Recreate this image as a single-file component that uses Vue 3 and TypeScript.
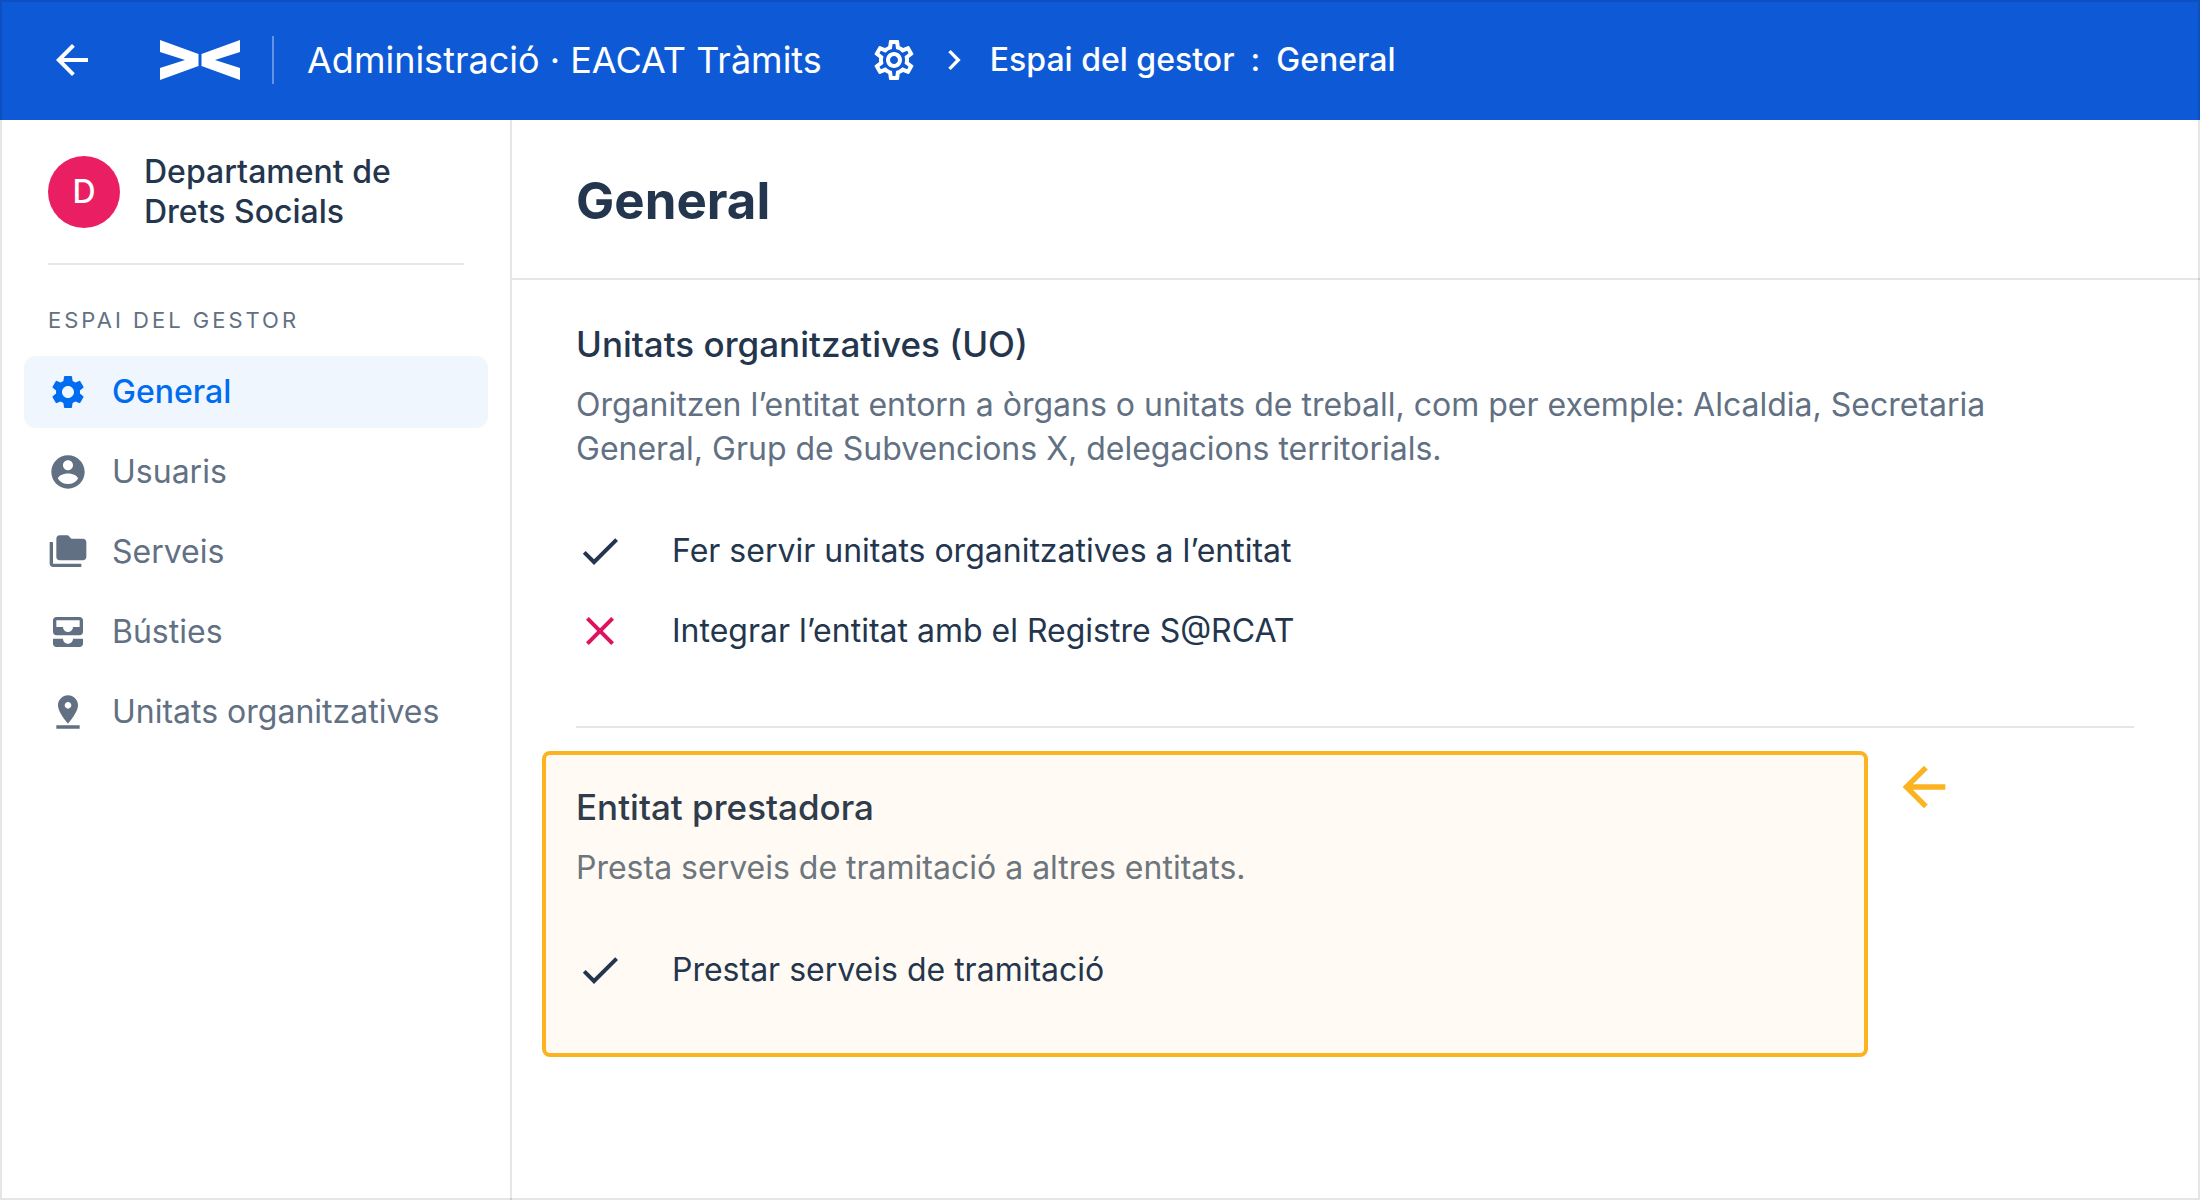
<script setup lang="ts">
interface NavItem {
  label: string
  icon: string
  active?: boolean
}

interface Setting {
  label: string
  enabled: boolean
}

const CHECK = 'M9 16.17 4.83 12l-1.42 1.41L9 19 21 7l-1.41-1.41z'
const CROSS =
  'M19 6.41 17.59 5 12 10.59 6.41 5 5 6.41 10.59 12 5 17.59 6.41 19 12 13.41 17.59 19 19 17.59 13.41 12z'
const ARROW = 'M20 11H7.83l5.59-5.59L12 4l-8 8 8 8 1.41-1.41L7.83 13H20z'

const navItems: NavItem[] = [
  {
    label: 'General',
    active: true,
    icon: 'M19.14 12.94c.04-.3.06-.61.06-.94 0-.32-.02-.64-.07-.94l2.03-1.58c.18-.14.23-.41.12-.61l-1.92-3.32c-.12-.22-.37-.29-.59-.22l-2.39.96c-.5-.38-1.03-.7-1.62-.94l-.36-2.54c-.04-.24-.24-.41-.48-.41h-3.84c-.24 0-.43.17-.47.41l-.36 2.54c-.59.24-1.13.57-1.62.94l-2.39-.96c-.22-.08-.47 0-.59.22L2.74 8.87c-.12.21-.08.47.12.61l2.03 1.58c-.05.3-.09.63-.09.94s.02.64.07.94l-2.03 1.58c-.18.14-.23.41-.12.61l1.92 3.32c.12.22.37.29.59.22l2.39-.96c.5.38 1.03.7 1.62.94l.36 2.54c.05.24.24.41.48.41h3.84c.24 0 .44-.17.47-.41l.36-2.54c.59-.24 1.13-.56 1.62-.94l2.39.96c.22.08.47 0 .59-.22l1.92-3.32c.12-.22.07-.47-.12-.61l-2.01-1.58zM12 15.6c-1.98 0-3.6-1.62-3.6-3.6s1.62-3.6 3.6-3.6 3.6 1.62 3.6 3.6-1.62 3.6-3.6 3.6z',
  },
  {
    label: 'Usuaris',
    icon: 'M12 2C6.48 2 2 6.48 2 12s4.48 10 10 10 10-4.48 10-10S17.52 2 12 2zm0 3c1.66 0 3 1.34 3 3s-1.34 3-3 3-3-1.34-3-3 1.34-3 3-3zm0 14.2c-2.5 0-4.71-1.28-6-3.22.03-1.99 4-3.08 6-3.08 1.99 0 5.97 1.09 6 3.08-1.29 1.94-3.5 3.22-6 3.22z',
  },
  {
    label: 'Serveis',
    icon: 'M3 6H1v13c0 1.1.9 2 2 2h17v-2H3V6zm18-2h-7l-2-2H7c-1.1 0-1.99.9-1.99 2L5 15c0 1.1.9 2 2 2h14c1.1 0 2-.9 2-2V6c0-1.1-.9-2-2-2z',
  },
  {
    label: 'Bústies',
    icon: 'M19 3H5c-1.1 0-2 .9-2 2v7c0 1.1.9 2 2 2h14c1.1 0 2-.9 2-2V5c0-1.1-.9-2-2-2zm0 6h-4c0 1.62-1.38 3-3 3s-3-1.38-3-3H5V5h14v4zm-4 7h6v3c0 1.1-.9 2-2 2H5c-1.1 0-2-.9-2-2v-3h6c0 1.66 1.34 3 3 3s3-1.34 3-3z',
  },
  {
    label: 'Unitats organitzatives',
    icon: 'M18 8c0-3.31-2.69-6-6-6S6 4.69 6 8c0 4.5 6 11 6 11s6-6.5 6-11zm-8 0c0-1.1.9-2 2-2s2 .9 2 2-.89 2-2 2c-1.1 0-2-.9-2-2zM5 20v2h14v-2H5z',
  },
]

const unitSettings: Setting[] = [
  { label: 'Fer servir unitats organitzatives a l’entitat', enabled: true },
  { label: 'Integrar l’entitat amb el Registre S@RCAT', enabled: false },
]

const providerSettings: Setting[] = [{ label: 'Prestar serveis de tramitació', enabled: true }]
</script>

<template>
  <div class="page">
    <header class="topbar">
      <button class="back" type="button" aria-label="Enrere">
        <svg viewBox="0 0 24 24" aria-hidden="true"><path :d="ARROW" /></svg>
      </button>
      <svg class="logo" viewBox="0 0 80 40" aria-hidden="true">
        <path d="M0 0 38.5 14v12L0 40V28l25-8L0 12zM80 0 41.5 14v12L80 40V28l-25-8 25-8z" />
      </svg>
      <span class="rule"></span>
      <a class="product" href="#">Administració · EACAT Tràmits</a>
      <svg class="gear" viewBox="0 0 24 24" aria-hidden="true">
        <path
          d="M19.43 12.98c.04-.32.07-.64.07-.98s-.03-.66-.07-.98l2.11-1.65c.19-.15.24-.42.12-.64l-2-3.46c-.09-.16-.26-.25-.44-.25-.06 0-.12.01-.17.03l-2.49 1c-.52-.4-1.08-.73-1.69-.98l-.38-2.65C14.46 2.18 14.25 2 14 2h-4c-.25 0-.46.18-.49.42l-.38 2.65c-.61.25-1.17.59-1.69.98l-2.49-1c-.06-.02-.12-.03-.18-.03-.17 0-.34.09-.43.25l-2 3.46c-.13.22-.07.49.12.64l2.11 1.65c-.04.32-.07.65-.07.98s.03.66.07.98l-2.11 1.65c-.19.15-.24.42-.12.64l2 3.46c.09.16.26.25.44.25.06 0 .12-.01.17-.03l2.49-1c.52.4 1.08.73 1.69.98l.38 2.65c.03.24.24.42.49.42h4c.25 0 .46-.18.49-.42l.38-2.65c.61-.25 1.17-.59 1.69-.98l2.49 1c.06.02.12.03.18.03.17 0 .34-.09.43-.25l2-3.46c.12-.22.07-.49-.12-.64l-2.11-1.65zm-1.98-1.71c.04.31.05.52.05.73s-.02.43-.05.73l-.14 1.13.89.7 1.08.84-.7 1.21-1.27-.51-1.04-.42-.9.68c-.43.32-.84.56-1.25.73l-1.06.43-.16 1.13-.2 1.35h-1.4l-.19-1.35-.16-1.13-1.06-.43c-.43-.18-.83-.41-1.23-.71l-.91-.7-1.06.43-1.27.51-.7-1.21 1.08-.84.89-.7-.14-1.13c-.03-.31-.05-.54-.05-.74s.02-.43.05-.73l.14-1.13-.89-.7-1.08-.84.7-1.21 1.27.51 1.04.42.9-.68c.43-.32.84-.56 1.25-.73l1.06-.43.16-1.13.2-1.35h1.39l.19 1.35.16 1.13 1.06.43c.43.18.83.41 1.23.71l.91.7 1.06-.43 1.27-.51.7 1.21-1.07.85-.89.7.14 1.13zM12 8c-2.21 0-4 1.79-4 4s1.79 4 4 4 4-1.79 4-4-1.79-4-4-4zm0 6c-1.1 0-2-.9-2-2s.9-2 2-2 2 .9 2 2-.9 2-2 2z"
        />
      </svg>
      <svg class="chevron" viewBox="0 0 24 24" aria-hidden="true">
        <path d="M10 6 8.59 7.41 13.17 12l-4.58 4.59L10 18l6-6z" />
      </svg>
      <nav class="crumbs" aria-label="Ruta">
        <a href="#">Espai del gestor</a>
        <span>:</span>
        <a href="#">General</a>
      </nav>
    </header>

    <div class="body">
      <aside class="sidebar">
        <div class="entity">
          <span class="avatar">D</span>
          <span class="entity-name">Departament de Drets Socials</span>
        </div>
        <h2 class="caption">Espai del gestor</h2>
        <nav class="menu" aria-label="Espai del gestor">
          <a
            v-for="item in navItems"
            :key="item.label"
            href="#"
            class="menu-item"
            :class="{ active: item.active }"
          >
            <svg viewBox="0 0 24 24" aria-hidden="true"><path :d="item.icon" /></svg>
            <span>{{ item.label }}</span>
          </a>
        </nav>
      </aside>

      <main class="content">
        <div class="heading">
          <h1>General</h1>
        </div>

        <section class="section">
          <h2>Unitats organitzatives (UO)</h2>
          <p>
            Organitzen l’entitat entorn a òrgans o unitats de treball, com per exemple: Alcaldia,
            Secretaria General, Grup de Subvencions X, delegacions territorials.
          </p>
          <ul class="settings">
            <li v-for="s in unitSettings" :key="s.label" :class="{ off: !s.enabled }">
              <svg viewBox="0 0 24 24" aria-hidden="true"><path :d="s.enabled ? CHECK : CROSS" /></svg>
              <span>{{ s.label }}</span>
            </li>
          </ul>
        </section>

        <div class="highlight-row">
          <section class="highlight">
            <h2>Entitat prestadora</h2>
            <p>Presta serveis de tramitació a altres entitats.</p>
            <ul class="settings">
              <li v-for="s in providerSettings" :key="s.label" :class="{ off: !s.enabled }">
                <svg viewBox="0 0 24 24" aria-hidden="true"><path :d="s.enabled ? CHECK : CROSS" /></svg>
                <span>{{ s.label }}</span>
              </li>
            </ul>
          </section>
          <svg class="pointer" viewBox="0 0 24 24" aria-hidden="true"><path :d="ARROW" /></svg>
        </div>
      </main>
    </div>
  </div>
</template>

<style>
body {
  margin: 0;
  background: #fff;
}
</style>

<style scoped>
.page {
  position: relative;
  display: flex;
  flex-direction: column;
  min-height: 100vh;
  box-sizing: border-box;
  font-family: Inter, 'Liberation Sans', sans-serif;
  font-size: 32px;
  line-height: 40px;
  color: #24364d;
}

/* Hairline frame laid over the whole window, header included */
.page::after {
  content: '';
  position: absolute;
  inset: 0;
  border: 2px solid rgba(0, 0, 0, 0.1);
  pointer-events: none;
}

svg {
  flex: none;
  fill: currentColor;
}

a {
  color: inherit;
  text-decoration: none;
}

h1,
h2,
p,
ul {
  margin: 0;
  padding: 0;
}

.topbar {
  display: flex;
  align-items: center;
  height: 120px;
  padding: 0 48px;
  box-sizing: border-box;
  background: #0e5ad6;
  color: #fff;
  white-space: nowrap;
}

.back {
  display: flex;
  padding: 0;
  border: 0;
  background: none;
  color: inherit;
  cursor: pointer;
}

.back svg,
.gear {
  width: 48px;
  height: 48px;
}

.logo {
  width: 80px;
  height: 40px;
  margin: 0 32px 0 64px;
}

.rule {
  width: 2px;
  height: 48px;
  margin-right: 33px;
  background: rgba(255, 255, 255, 0.35);
}

.product {
  font-size: 36px;
}

.gear {
  margin-left: 48px;
}

.chevron {
  width: 40px;
  height: 40px;
  margin: 0 16px;
}

.crumbs {
  display: flex;
  gap: 16px;
  font-weight: 500;
}

.body {
  display: flex;
  flex: 1;
}

.sidebar {
  flex: none;
  width: 512px;
  padding: 0 22px 24px 24px;
  box-sizing: border-box;
  border-right: 2px solid #e6e6e6;
}

.entity {
  display: flex;
  align-items: center;
  gap: 24px;
  margin: 0 24px;
  padding: 32px 0 31px;
  border-bottom: 2px solid #e6e6e6;
  font-weight: 500;
}

.avatar {
  display: flex;
  flex: none;
  align-items: center;
  justify-content: center;
  width: 72px;
  height: 72px;
  border-radius: 50%;
  background: #ea1f63;
  color: #fff;
}

.entity-name {
  max-width: 280px;
}

.caption {
  padding: 39px 24px 20px;
  font-size: 22px;
  line-height: 32px;
  font-weight: 400;
  letter-spacing: 3px;
  text-transform: uppercase;
  color: #627083;
}

.menu {
  display: flex;
  flex-direction: column;
  gap: 8px;
}

.menu-item {
  display: flex;
  align-items: center;
  gap: 24px;
  height: 72px;
  padding: 0 24px;
  border-radius: 12px;
  color: #627083;
  white-space: nowrap;
}

.menu-item svg {
  width: 40px;
  height: 40px;
}

.menu-item.active {
  background: #eff6fe;
  color: #006cf0;
  font-weight: 500;
}

.content {
  flex: 1;
  min-width: 0;
}

.heading {
  padding: 49px 64px 45px;
  border-bottom: 2px solid #e6e6e6;
}

h1 {
  font-size: 51px;
  line-height: 64px;
  font-weight: 700;
}

.section {
  margin: 0 66px 0 64px;
  padding: 42px 0 71px;
  border-bottom: 2px solid #e6e6e6;
}

.section h2,
.highlight h2 {
  font-size: 35px;
  line-height: 44px;
  font-weight: 500;
}

.section p,
.highlight p {
  max-width: 1480px;
  margin-top: 17px;
  line-height: 44px;
  color: #627083;
}

.settings {
  display: flex;
  flex-direction: column;
  gap: 32px;
  margin-top: 56px;
  list-style: none;
}

.settings li {
  display: flex;
  align-items: center;
  gap: 48px;
  height: 48px;
}

.settings svg {
  width: 48px;
  height: 48px;
}

.off svg {
  color: #dc1460;
}

.highlight-row {
  display: flex;
  align-items: flex-start;
  gap: 24px;
  padding: 23px 244px 24px 30px;
}

.highlight {
  flex: 1;
  padding: 30px 30px 59px;
  border: 4px solid #fbb321;
  border-radius: 8px;
  background: #fffaf4;
}

.highlight h2 {
  color: #2f3c4b;
}

.highlight p {
  color: #6d757d;
}

.pointer {
  width: 64px;
  height: 64px;
  margin-top: 4px;
  color: #fbb321;
}
</style>
